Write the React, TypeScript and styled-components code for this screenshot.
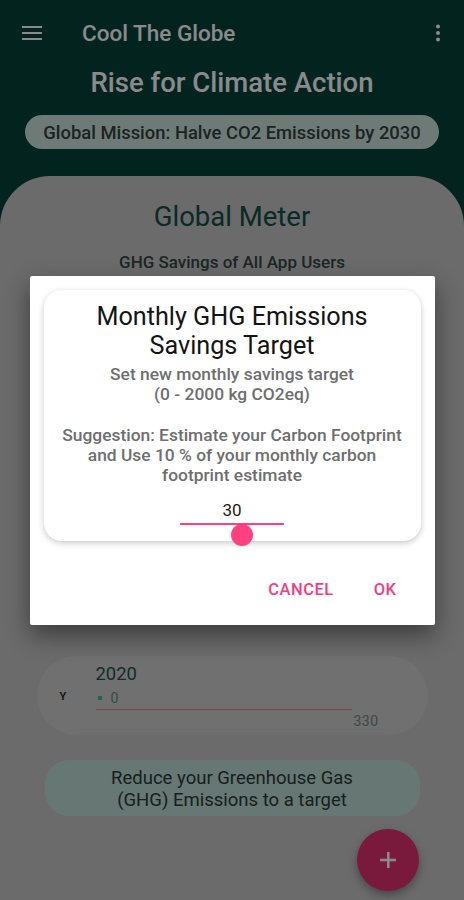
import React from "react";
import styled, { createGlobalStyle } from "styled-components";

const Global = createGlobalStyle`
  html, body { margin: 0; padding: 0; }
  body { font-family: Roboto, "Noto Sans", "Liberation Sans", sans-serif; background: #06413a; }
  * { box-sizing: border-box; }
`;

const Screen = styled.div`
  position: relative;
  width: 464px;
  height: 900px;
  overflow: hidden;
  background: #06413a;
  display: flex;
  flex-direction: column;
`;

const AppBar = styled.header`
  height: 66px;
  display: flex;
  align-items: center;
  padding: 0 16px 0 22px;
  color: #ffffff;
`;

const IconBtn = styled.div`
  width: 20px;
  height: 20px;
  display: flex;
  align-items: center;
  justify-content: center;
`;

const BarTitle = styled.h1`
  margin: 0 0 0 40px;
  font-size: 22.5px;
  font-weight: 500;
  flex: 1;
`;

const Headline = styled.h2`
  margin: 0;
  text-align: center;
  color: #ffffff;
  font-size: 27.5px;
  font-weight: 500;
  line-height: 34px;
`;

const MissionPill = styled.div`
  margin: 15px 25px 0 25px;
  height: 34px;
  border-radius: 17px;
  background: #cce2db;
  color: #32433f;
  font-size: 18.4px;
  font-weight: 500;
  display: flex;
  align-items: center;
  justify-content: center;
  white-space: nowrap;
`;

const Sheet = styled.main`
  margin-top: 27px;
  flex: 1;
  background: #c6c6c6;
  border-radius: 50px 50px 0 0;
  display: flex;
  flex-direction: column;
  align-items: center;
  padding-top: 25px;
`;

const MeterTitle = styled.div`
  font-size: 27.5px;
  color: #144e47;
  line-height: 32px;
`;

const MeterSub = styled.div`
  margin-top: 19px;
  font-size: 17px;
  line-height: 20px;
  font-weight: 500;
  color: #344644;
`;

const MeterArea = styled.div`
  width: 426px;
  height: 376px;
  margin-top: 8px;
`;

const ChartPill = styled.div`
  position: relative;
  width: 391px;
  height: 79px;
  border-radius: 40px;
  background: #cfcfcf;
  display: grid;
  grid-template-columns: 59px 1fr;
  padding: 8px 0 0 0;
`;

const AxisLabel = styled.div`
  font-size: 11px;
  font-weight: 700;
  color: #303030;
  padding: 26px 0 0 23px;
`;

const ChartBody = styled.div`
  display: flex;
  flex-direction: column;
  width: 283px;
`;

const Year = styled.div`
  font-size: 18.4px;
  color: #1c5550;
  line-height: 20px;
`;

const Legend = styled.div`
  display: flex;
  align-items: center;
  gap: 9px;
  margin-top: 6px;
  font-size: 14px;
  line-height: 16px;
  color: #6f8580;
  padding-left: 2px;
`;

const Dot = styled.span`
  width: 4px;
  height: 4px;
  background: #2fc884;
`;

const Track = styled.div`
  height: 1px;
  width: 256px;
  background: #f27a98;
  margin-top: 3px;
`;

const MaxLabel = styled.div`
  font-size: 14px;
  color: #6f8580;
  align-self: flex-end;
  margin-top: 3px;
  letter-spacing: 0.5px;
`;

const GoalPill = styled.div`
  margin-top: 25px;
  width: 375px;
  height: 56px;
  border-radius: 24px;
  background: #bfdcd4;
  color: #2a3b38;
  font-size: 18.5px;
  line-height: 22px;
  text-align: center;
  display: flex;
  align-items: center;
  justify-content: center;
  padding-top: 2px;
`;

const Fab = styled.div`
  position: absolute;
  left: 357px;
  top: 829px;
  width: 62px;
  height: 62px;
  border-radius: 50%;
  background: #e0306f;
  box-shadow: 0 4px 10px rgba(0, 0, 0, 0.35);
  display: flex;
  align-items: center;
  justify-content: center;
`;

const Scrim = styled.div`
  position: absolute;
  inset: 0;
  background: rgba(0, 0, 0, 0.46);
  display: flex;
  align-items: center;
  justify-content: center;
`;

const Dialog = styled.div`
  width: 405px;
  height: 349px;
  background: #ffffff;
  border-radius: 2px;
  box-shadow: 0 10px 24px rgba(0, 0, 0, 0.45);
  padding: 14px;
  display: flex;
  flex-direction: column;
  margin-top: 1px;
`;

const InnerCard = styled.div`
  height: 251px;
  border-radius: 18px;
  background: #ffffff;
  box-shadow: 0 2px 6px rgba(0, 0, 0, 0.22);
  display: flex;
  flex-direction: column;
  align-items: center;
  padding-top: 12px;
`;

const DTitle = styled.div`
  font-size: 25.2px;
  line-height: 29px;
  color: #141414;
  text-align: center;
`;

const DBody = styled.div`
  margin-top: 4px;
  font-size: 17.4px;
  font-weight: 500;
  line-height: 20.3px;
  color: #6e6e6e;
  text-align: center;
  white-space: pre-line;
`;

const Value = styled.div`
  margin-top: 14px;
  font-size: 17px;
  color: #1a1a1a;
  line-height: 20px;
`;

const Slider = styled.div`
  position: relative;
  width: 104px;
  height: 2px;
  margin-top: 3px;
  background: #ff4081;
`;

const Thumb = styled.div`
  position: absolute;
  left: 51px;
  top: 1px;
  width: 22px;
  height: 22px;
  border-radius: 50%;
  background: #ff4081;
`;

const Actions = styled.div`
  display: flex;
  justify-content: flex-end;
  align-items: center;
  gap: 40px;
  padding: 39px 24px 0 0;
`;

const ActionBtn = styled.div`
  font-size: 16.5px;
  font-weight: 500;
  letter-spacing: 0.5px;
  color: #f0407f;
`;

const Menu = () => (
  <svg width="20" height="14" viewBox="0 0 20 14">
    <rect x="0" y="0" width="20" height="2" fill="#fff" />
    <rect x="0" y="6" width="20" height="2" fill="#fff" />
    <rect x="0" y="12" width="20" height="2" fill="#fff" />
  </svg>
);

const Dots = () => (
  <svg width="6" height="18" viewBox="0 0 6 18">
    <circle cx="3" cy="2.5" r="2" fill="#fff" />
    <circle cx="3" cy="9" r="2" fill="#fff" />
    <circle cx="3" cy="15.5" r="2" fill="#fff" />
  </svg>
);

const Plus = () => (
  <svg width="18" height="18" viewBox="0 0 18 18">
    <rect x="8" y="1" width="2.6" height="16" fill="#fff" />
    <rect x="1" y="7.7" width="16" height="2.6" fill="#fff" />
  </svg>
);

export default function App() {
  return (
    <>
      <Global />
      <Screen>
        <AppBar>
          <IconBtn>
            <Menu />
          </IconBtn>
          <BarTitle>Cool The Globe</BarTitle>
          <IconBtn>
            <Dots />
          </IconBtn>
        </AppBar>
        <Headline>Rise for Climate Action</Headline>
        <MissionPill>Global Mission: Halve CO2 Emissions by 2030</MissionPill>
        <Sheet>
          <MeterTitle>Global Meter</MeterTitle>
          <MeterSub>GHG Savings of All App Users</MeterSub>
          <MeterArea />
          <ChartPill>
            <AxisLabel>Y</AxisLabel>
            <ChartBody>
              <Year>2020</Year>
              <Legend>
                <Dot />0
              </Legend>
              <Track />
              <MaxLabel>330</MaxLabel>
            </ChartBody>
          </ChartPill>
          <GoalPill>
            Reduce your Greenhouse Gas
            <br />
            (GHG) Emissions to a target
          </GoalPill>
        </Sheet>
        <Fab>
          <Plus />
        </Fab>
        <Scrim>
          <Dialog>
            <InnerCard>
              <DTitle>
                Monthly GHG Emissions
                <br />
                Savings Target
              </DTitle>
              <DBody>
                {"Set new monthly savings target\n(0 - 2000 kg CO2eq)\n\nSuggestion: Estimate your Carbon Footprint\nand Use 10 % of your monthly carbon\nfootprint estimate"}
              </DBody>
              <Value>30</Value>
              <Slider>
                <Thumb />
              </Slider>
            </InnerCard>
            <Actions>
              <ActionBtn>CANCEL</ActionBtn>
              <ActionBtn>OK</ActionBtn>
            </Actions>
          </Dialog>
        </Scrim>
      </Screen>
    </>
  );
}
